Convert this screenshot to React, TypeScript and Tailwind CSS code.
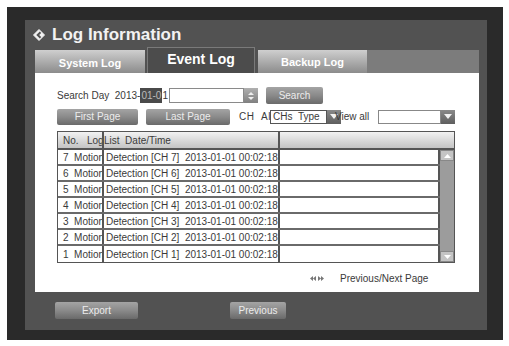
import React from 'react'

const rows = [7, 6, 5, 4, 3, 2, 1]

function GrayButton({ label, className }: { label: string; className: string }) {
  return (
    <div
      className={`flex items-center justify-center rounded-[2px] bg-gradient-to-b from-[#a4a4a4] via-[#8a8a8a] to-[#6a6a6a] text-[10px] text-[#ececec] ${className}`}
    >
      {label}
    </div>
  )
}

function Arrow() {
  return (
    <div className="flex items-center justify-center w-[14px] h-full bg-gradient-to-b from-[#8a8a8a] to-[#5e5e5e]">
      <svg width="8" height="5" viewBox="0 0 8 5">
        <path d="M0 0 L8 0 L4 5 Z" fill="#f2f2f2" />
      </svg>
    </div>
  )
}

export default function App() {
  return (
    <div className="w-[509px] h-[346px] bg-white pt-[7px] pl-[7px] pr-[6px] pb-[6px] font-['Liberation_Sans',Arial,sans-serif]">
      <div className="h-full bg-[#2a2a2a] pl-[18px] pt-[13px] pr-[16px] pb-[10px]">
        <div className="h-full bg-[#525252] flex flex-col">
          {/* title */}
          <div className="h-[27px] flex items-center pl-[8px] gap-[7px] pt-[2px]">
            <svg width="12" height="12" viewBox="0 0 12 12">
              <path d="M6 0.5 L11.5 6 L6 11.5 L0.5 6 Z" fill="#f2f2f2" stroke="#f2f2f2" strokeLinejoin="round" />
              <path d="M7.5 3.2 L4.7 6 L7.5 8.8" fill="none" stroke="#525252" strokeWidth="2" />
            </svg>
            <span className="text-[17px] font-bold text-[#f2f2f2] leading-none">Log Information</span>
          </div>

          {/* tabs */}
          <div className="h-[26px] flex items-end pl-[10px] pr-[8px]">
            <div className="w-[110px] h-[23px] flex items-center justify-center pt-[4px] bg-gradient-to-b from-[#cfcfcf] to-[#8c8c8c] text-[11px] font-bold text-white">
              System Log
            </div>
            <div className="ml-[2px] w-[108px] h-[26px] flex items-center justify-center pb-[2px] bg-[#4c4c4c] border-t border-x border-[#7a7a7a] text-[14px] font-bold text-white">
              Event Log
            </div>
            <div className="ml-[3px] w-[109px] h-[23px] flex items-center justify-center pt-[2px] bg-gradient-to-b from-[#cfcfcf] to-[#8c8c8c] text-[11px] font-bold text-white">
              Backup Log
            </div>
            <div className="flex-1 h-[23px] bg-[#7c7c7c]" />
          </div>

          {/* content */}
          <div className="h-[219px] bg-white ml-[10px] mr-[8px] pl-[22px] pt-[15px] flex flex-col text-[10px] text-[#3a3a3a]">
            <div className="h-[15px] flex items-center">
              <span>Search Day&nbsp;&nbsp;2013-</span>
              <span className="bg-[#4a4a4a] text-[#bbbbbb] px-[1px]">01-0</span>
              <span>1</span>
              <div className="ml-[1px] w-[75px] h-[15px] border border-[#8a8a8a] bg-white" />
              <div className="w-[14px] h-[15px] flex flex-col bg-gradient-to-b from-[#b0b0b0] to-[#808080] items-center justify-center gap-[2px]">
                <svg width="6" height="3" viewBox="0 0 6 3"><path d="M0 3 L6 3 L3 0 Z" fill="#eee" /></svg>
                <svg width="6" height="3" viewBox="0 0 6 3"><path d="M0 0 L6 0 L3 3 Z" fill="#eee" /></svg>
              </div>
              <GrayButton label="Search" className="ml-[8px] w-[57px] h-[17px]" />
            </div>

            <div className="mt-[6px] h-[15px] flex items-center">
              <GrayButton label="First Page" className="w-[81px] h-[16px]" />
              <GrayButton label="Last Page" className="ml-[8px] w-[84px] h-[16px]" />
              <span className="ml-[9px] w-[31px] tracking-[0.5px]">CH&nbsp;&nbsp;Al</span>
              <div className="w-[57px] h-[14px] border border-[#555] bg-white flex items-center pl-[2px]">CHs&nbsp;&nbsp;Type</div>
              <div className="w-[14px] h-[14px]">
                <Arrow />
              </div>
              <span className="-ml-[6px] w-[43px]">View all</span>
              <div className="w-[63px] h-[14px] border border-[#888] bg-white" />
              <div className="w-[14px] h-[14px]">
                <Arrow />
              </div>
            </div>

            {/* table */}
            <div className="mt-[7px] w-[398px] border border-[#555] flex flex-col">
              <div className="h-[18px] grid grid-cols-[46px_176px_1fr] bg-gradient-to-b from-[#f2f2f2] to-[#c4c4c4] border-b-2 border-[#555]">
                <div className="pl-[5px] flex items-center border-r-2 border-[#555] whitespace-nowrap overflow-hidden">No.&nbsp;&nbsp;&nbsp;Log</div>
                <div className="flex items-center border-r-2 border-[#555] whitespace-nowrap">List&nbsp;&nbsp;Date/Time</div>
                <div />
              </div>
              <div className="flex">
                <div className="flex-1 flex flex-col">
                  {rows.map(n => (
                    <div key={n} className="h-[16px] grid grid-cols-[46px_176px_1fr] border-b-2 border-[#6a6a6a] last:border-b-0">
                      <div className="pl-[5px] flex items-center border-r-2 border-[#555] whitespace-nowrap overflow-hidden">
                        {n}&nbsp;&nbsp;Motion
                      </div>
                      <div className="pl-[2px] flex items-center border-r-2 border-[#555] whitespace-nowrap overflow-hidden">
                        Detection [CH {n}]&nbsp;&nbsp;2013-01-01 00:02:18
                      </div>
                      <div className="border-r-2 border-[#555]" />
                    </div>
                  ))}
                </div>
                <div className="w-[14px] bg-[#9c9c9c] flex flex-col justify-between">
                  <div className="h-[11px] bg-[#c4c4c4] border border-[#888] flex items-center justify-center">
                    <svg width="7" height="4" viewBox="0 0 7 4"><path d="M0 4 L7 4 L3.5 0 Z" fill="#fff" /></svg>
                  </div>
                  <div className="h-[11px] bg-[#c4c4c4] border border-[#888] flex items-center justify-center">
                    <svg width="7" height="4" viewBox="0 0 7 4"><path d="M0 0 L7 0 L3.5 4 Z" fill="#fff" /></svg>
                  </div>
                </div>
              </div>
            </div>

            <div className="mt-[8px] flex items-center pl-[253px] text-[#3a3a3a]">
              <svg width="14" height="5" viewBox="0 0 14 5">
                <path d="M0 2.5 L3 0 L3 5 Z M3 2.5 L6 0 L6 5 Z" fill="#777" />
                <path d="M8 0 L11 2.5 L8 5 Z M11 0 L14 2.5 L11 5 Z" fill="#777" />
              </svg>
              <span className="ml-[16px]">Previous/Next Page</span>
            </div>
          </div>

          {/* bottom */}
          <div className="flex pl-[30px] pt-[10px]">
            <GrayButton label="Export" className="w-[83px] h-[17px]" />
            <GrayButton label="Previous" className="ml-[92px] w-[56px] h-[17px]" />
          </div>
        </div>
      </div>
    </div>
  )
}
